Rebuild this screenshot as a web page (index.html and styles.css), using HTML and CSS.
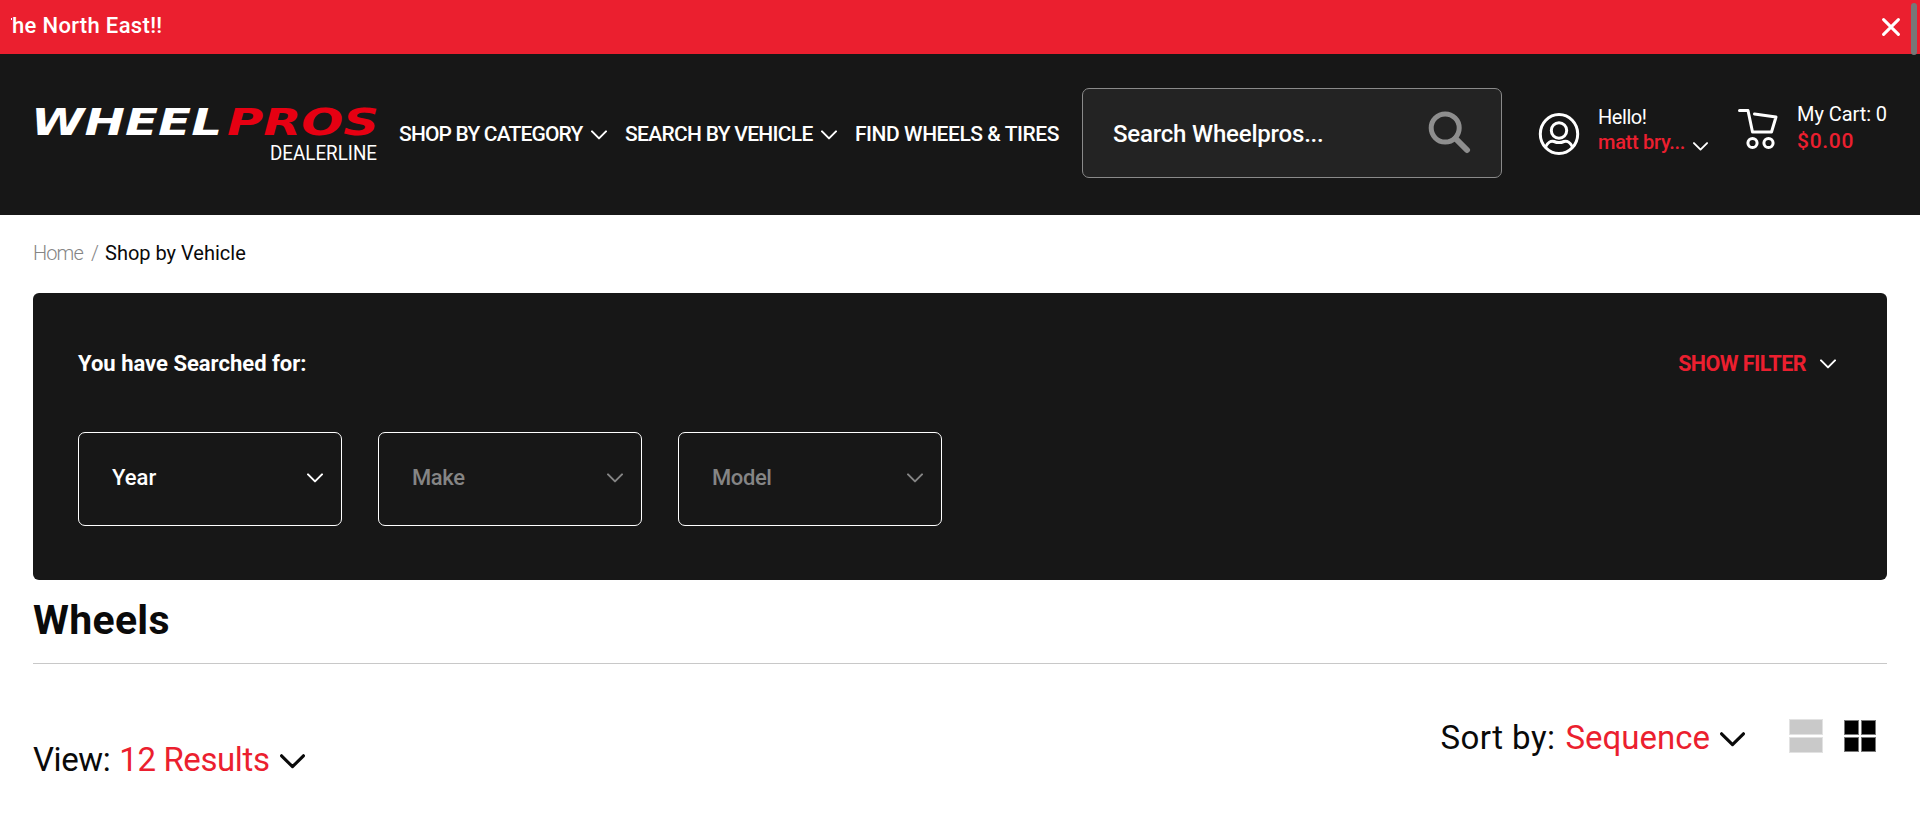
FILE: index.html
```html
<!DOCTYPE html>
<html lang="en">
<head>
<meta charset="utf-8">
<title>Wheels</title>
<link rel="stylesheet" href="styles.css">
</head>
<body>
<svg width="0" height="0" class="defs">
  <symbol id="chev" viewBox="0 0 24 14"><path d="M1.5 1.5 12 12 22.5 1.5" fill="none" stroke="currentColor" stroke-width="3" stroke-linecap="round" stroke-linejoin="round"/></symbol>
</svg>
<div class="scroll-thumb"></div>
<div class="banner">
  <div class="ticker">he North East!!</div>
  <svg class="close" viewBox="0 0 18 18"><path d="M1.6 1.6 16.4 16.4M16.4 1.6 1.6 16.4" stroke="#fff" stroke-width="3" stroke-linecap="round"/></svg>
</div>
<header class="header">
  <svg class="logo" viewBox="0 0 346 56">
    <text class="logo-word white" x="-2" y="27.500" textLength="191" lengthAdjust="spacingAndGlyphs">WHEEL</text>
    <text class="logo-word red" x="194" y="27.500" textLength="152" lengthAdjust="spacingAndGlyphs">PROS</text>
    <text class="logo-sub" x="237" y="53" textLength="107" lengthAdjust="spacingAndGlyphs">DEALERLINE</text>
  </svg>
  <nav class="nav">
    <a class="n1">SHOP BY CATEGORY</a><svg class="chev nav-chev"><use href="#chev"/></svg>
    <a class="n2">SEARCH BY VEHICLE</a><svg class="chev nav-chev"><use href="#chev"/></svg>
    <a class="n3">FIND WHEELS &amp; TIRES</a>
  </nav>
  <div class="search">
    <span>Search Wheelpros...</span>
    <svg class="search-icon" viewBox="0 0 43 43"><circle cx="17.2" cy="17" r="14" fill="none" stroke="#8e8e8e" stroke-width="5"/><path d="M27.500 27.500 39 39" stroke="#8e8e8e" stroke-width="6" stroke-linecap="round"/></svg>
  </div>
  <div class="account">
    <svg class="user-icon" viewBox="0 0 42 44"><g fill="none" stroke="#fff" stroke-width="3"><ellipse cx="21" cy="22" rx="18.7" ry="19.5"/><circle cx="21" cy="18.5" r="7.7"/><path d="M7.5 35c2-4.500 5.500-6.500 8.500-5.500 3.500 1.500 6.500 1.500 10 0 3-1 6.500 1 8.500 5.500"/></g></svg>
    <div class="hello"><span class="hi">Hello!</span><div class="name"><span>matt bry...</span><svg class="chev name-chev"><use href="#chev"/></svg></div></div>
  </div>
  <div class="cart">
    <svg class="cart-icon" viewBox="0 0 42 42"><g fill="none" stroke="#fff" stroke-width="3" stroke-linecap="round" stroke-linejoin="round"><path d="M2.500 2.500H11L15.500 24H34.500L39 9 17.500 6"/><circle cx="15.500" cy="35" r="4.600"/><circle cx="31.500" cy="35" r="4.600"/></g></svg>
    <div class="cart-text"><span class="count">My Cart: 0</span><span class="total">$0.00</span></div>
  </div>
</header>
<main class="main">
  <div class="crumbs"><a>Home</a><i>/</i><span>Shop by Vehicle</span></div>
  <section class="panel">
    <div class="panel-head">
      <h2>You have Searched for:</h2>
      <div class="show"><span>SHOW FILTER</span><svg class="chev"><use href="#chev"/></svg></div>
    </div>
    <div class="selects">
      <div class="select"><span>Year</span><svg class="chev"><use href="#chev"/></svg></div>
      <div class="select off"><span>Make</span><svg class="chev"><use href="#chev"/></svg></div>
      <div class="select off"><span>Model</span><svg class="chev"><use href="#chev"/></svg></div>
    </div>
  </section>
  <h1>Wheels</h1>
  <div class="toolbar">
    <div class="view"><span>View:</span><b>12 Results</b><svg class="chev big"><use href="#chev"/></svg></div>
    <div class="sort">
      <span>Sort by:</span><b>Sequence</b><svg class="chev big"><use href="#chev"/></svg>
      <div class="list"><i></i><i></i></div>
      <div class="grid"><i></i><i></i><i></i><i></i></div>
    </div>
  </div>
</main>
</body>
</html>
```

FILE: styles.css
```css
* { box-sizing: border-box; }
body { margin: 0; background: #fff; color: #0a0a0a; font-family: Roboto, sans-serif; overflow: hidden; height: 834px; }
span, a, b, h1, h2 { white-space: nowrap; }
.defs { position: absolute; }
svg { display: block; flex: none; }
.chev { width: 16px; height: 10px; }
.scroll-thumb { position: absolute; left: 1911px; top: 3px; width: 6px; height: 52px; border-radius: 3px; background: #777; }

.banner { height: 54px; background: #eb1f2f; display: flex; align-items: center; justify-content: space-between; padding: 0 20px 2px 11px; }
.ticker { display: flex; color: #fff; font-size: 22px; font-weight: 500; letter-spacing: .33px; line-height: 28px; }
.ticker::before { content: ""; width: 1px; height: 2px; margin-top: 6px; background: #fff; }
.close { width: 18px; height: 18px; margin-top: 2px; }

.header { height: 161px; background: #171717; color: #fff; display: flex; align-items: flex-start; padding-left: 33px; }
.logo { width: 346px; height: 56px; margin-top: 53px; overflow: visible; }
.logo-word { font: italic bold 37px "DejaVu Sans", sans-serif; }
.white { fill: #fff; }
.red { fill: #e60012; }
.logo-sub { font-size: 20px; fill: #fff; }
.nav { display: flex; align-items: center; margin: 66px 0 0 20px; font-size: 21px; font-weight: 500; line-height: 28px; }
.n1 { width: 184px; letter-spacing: -.83px; }
.n2 { width: 188px; letter-spacing: -.7px; }
.n3 { width: 204px; letter-spacing: -.45px; }
.nav-chev { margin: 1px 18px 0 8px; }
.search { width: 420px; height: 90px; margin: 34px 0 0 23px; background: #232323; border: 1px solid #8a8a8a; border-radius: 7px; display: flex; justify-content: space-between; align-items: center; padding: 0 30px 0 30px; font-size: 24px; font-weight: 500; letter-spacing: -.2px; }
.search span { padding-top: 2px; }
.search-icon { width: 43px; height: 43px; margin-bottom: 2px; }
.account { display: flex; margin-left: 36px; width: 199px; }
.user-icon { width: 42px; height: 44px; margin-top: 58px; }
.hello { margin: 50px 0 0 18px; font-size: 20px; line-height: 25px; }
.hi { display: block; height: 26px; padding-top: 1px; letter-spacing: -.45px; }
.name { display: flex; color: #eb1f2f; font-weight: 500; letter-spacing: -.29px; }
.name-chev { width: 15px; height: 9px; margin: 12px 0 0 8px; color: #fff; }
.cart { display: flex; }
.cart-icon { width: 42px; height: 42px; margin-top: 54px; }
.cart-text { margin: 47px 0 0 18px; display: flex; flex-direction: column; font-size: 20px; line-height: 27px; letter-spacing: -.06px; }
.total { color: #eb1f2f; font-size: 21px; font-weight: 500; letter-spacing: .7px; }

.main { padding: 0 33px; }
.crumbs { height: 78px; padding-top: 24px; display: flex; font-size: 20px; line-height: 28px; }
.crumbs a { width: 58px; color: #858585; font-weight: 300; letter-spacing: -.9px; }
.crumbs i { width: 14px; color: #858585; font-weight: 300; font-style: normal; }
.panel { height: 287px; background: #171717; color: #fff; border-radius: 6px; padding: 56px 45px 0; }
.panel-head { height: 83px; display: flex; justify-content: space-between; }
h2 { margin: 0; font-size: 22px; line-height: 29px; }
.show { display: flex; gap: 14px; margin-right: 6px; color: #eb1f2f; font-size: 21.5px; font-weight: 700; letter-spacing: -.55px; line-height: 29px; }
.show .chev { color: #fff; margin-top: 10px; }
.selects { display: flex; gap: 36px; }
.select { width: 264px; height: 94px; border: 1px solid #fff; border-radius: 7px; display: flex; align-items: center; justify-content: space-between; padding: 0 18px 2px 33px; font-size: 22px; font-weight: 500; }
.select span { margin-top: -2px; }
.off { letter-spacing: -.4px; }
.off span, .off .chev { color: #858585; }
h1 { margin: 0; height: 84px; padding-top: 15px; border-bottom: 1px solid #c8c8c8; font-size: 41px; line-height: 50px; letter-spacing: .3px; }
.toolbar { display: flex; justify-content: space-between; font-size: 33px; line-height: 40px; }
.toolbar b { color: #eb1f2f; font-weight: 400; }
.big { width: 25px; height: 15px; }
.view { display: flex; padding-top: 76px; letter-spacing: -.4px; }
.view b { margin-left: 9px; }
.view .big { margin: 14px 0 0 10px; }
.sort { display: flex; padding-top: 54px; letter-spacing: 0; }
.sort > span { width: 125px; letter-spacing: .45px; }
.sort .big { margin: 14px 0 0 10px; }
.list { display: grid; gap: 2px; width: 34px; height: 34px; margin: 1px 21px 0 44px; }
.list i { background: #c9c9c9; border: 1px solid #e2e2e2; }
.grid { display: grid; grid-template-columns: 1fr 1fr; gap: 2px; width: 32px; height: 32px; margin: 2px 11px 0 0; }
.grid i { background: #000; border: 1px solid #777; }
```
